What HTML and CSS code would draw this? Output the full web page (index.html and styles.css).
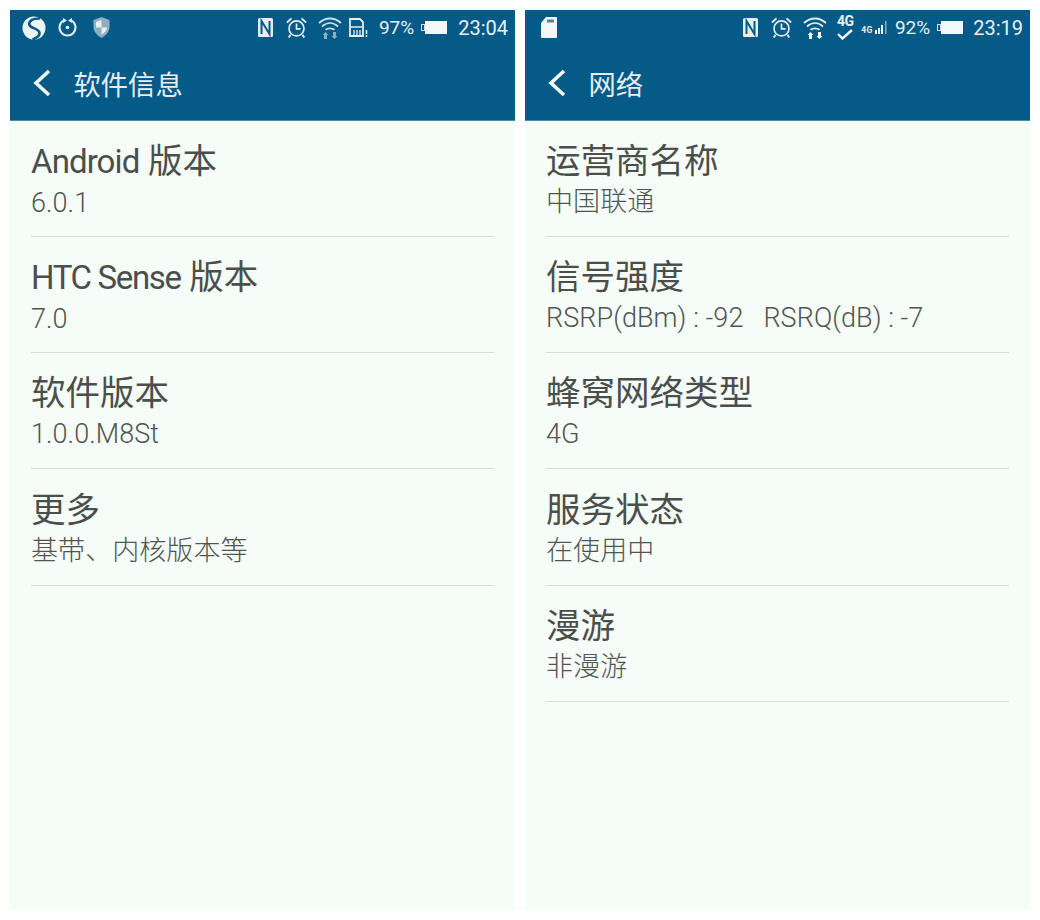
FILE: index.html
```html
<!DOCTYPE html>
<html lang="zh-CN">
<head>
  <meta charset="UTF-8">
  <title>软件信息 / 网络</title>
  <link rel="stylesheet" href="styles.css">
</head>
<body>

  <!-- Left phone: software info -->
  <div class="phone">
    <div class="status-bar">
      <div class="status-left">
        <svg class="icon-s" width="24" height="24" viewBox="0 0 24 24">
          <circle cx="12" cy="12" r="11.500" fill="#eef4f4"/>
          <path d="M18 2.500C11 2 6 5 7.500 9c1.500 4 9.500 3 10 8 .2 3-3 5-7 6.500" fill="none" stroke="#055a87" stroke-width="2.600"/>
        </svg>
        <svg class="icon-sync" width="21" height="19" viewBox="0 0 21 19">
          <path d="M14.500 2.500A8 8 0 1 1 6.500 2.500" fill="none" stroke="#e6eef1" stroke-width="2"/>
          <path d="M6 0l4 2.500L6 5zM15 0l-4 2.500L15 5z" fill="#e6eef1"/>
          <circle cx="10.500" cy="9.500" r="1.800" fill="#e6eef1"/>
        </svg>
        <svg class="icon-shield" width="17" height="21" viewBox="0 0 17 21">
          <path d="M8.500 0l8 3v7c0 5-4 8.500-8 11-4-2.500-8-6-8-11V3z" fill="#8fadbf"/>
          <path d="M8.500 3v7.500H3V5zM8.500 10.500H14c0 3-2.500 5.500-5.500 7z" fill="#e8f0f2"/>
        </svg>
      </div>
      <div class="status-right">
        <svg class="icon-n" width="15" height="19" viewBox="0 0 15 19">
          <rect width="15" height="19" rx="1.500" fill="#e6eef1"/>
          <path d="M3.500 16V3l8 13V3" fill="none" stroke="#055a87" stroke-width="2"/>
        </svg>
        <svg class="icon-alarm" width="21" height="21" viewBox="0 0 23 23">
          <circle cx="11.500" cy="12.500" r="8.200" fill="none" stroke="#e6eef1" stroke-width="1.800"/>
          <path d="M11.500 7V13H16" fill="none" stroke="#e6eef1" stroke-width="1.800"/>
          <path d="M1 6l5-4.500M22 6l-5-4.500M5 19.500l-2 3M18 19.500l2 3" stroke="#e6eef1" stroke-width="2"/>
        </svg>
        <svg class="icon-wifi" width="24" height="23" viewBox="0 0 24 23">
          <path d="M1 7C7.500 1 16.500 1 23 7M4 10.500C9 6 15 6 20 10.500M7.500 13.800C10 11.800 14 11.800 16.500 13.800" fill="none" stroke="#cfdee5" stroke-width="1.800"/>
          <path d="M7.500 16l3 3H9v4H6v-4H4.500zM16.500 23l-3-3H15v-4h3v4h1.500z" fill="#8fadbf"/>
        </svg>
        <svg class="icon-sim" width="19" height="19" viewBox="0 0 19 19">
          <path d="M1 1h10l3 3v14H1z" fill="none" stroke="#e6eef1" stroke-width="1.800"/>
          <path d="M2 9h11" stroke="#e6eef1" stroke-width="1.500"/>
          <path d="M5 12v5M8 12v5M11 12v5" stroke="#e6eef1" stroke-width="1.300"/>
          <path d="M17.500 12v4M17.500 17v2" stroke="#e6eef1" stroke-width="1.500"/>
        </svg>
        <span class="percent">97%</span>
        <svg class="icon-battery" width="26" height="13" viewBox="0 0 26 13">
          <rect x="4" y="0" width="22" height="13" fill="#f2f7f7"/>
          <rect x="0.500" y="3.500" width="3" height="6" fill="none" stroke="#cfdee5"/>
        </svg>
        <span class="clock">23:04</span>
      </div>
    </div>
    <div class="app-bar">
      <svg class="back" width="20" height="30" viewBox="0 0 20 30">
        <path d="M17 3L4 15l13 12" fill="none" stroke="#f2f7f7" stroke-width="3.600"/>
      </svg>
      <span class="app-title">软件信息</span>
    </div>
    <ul class="rows">
      <li class="row"><div class="row-title"><span class="latin latin-wide">Android</span> 版本</div><div class="row-sub">6.0.1</div></li>
      <li class="row"><div class="row-title"><span class="latin">HTC Sense</span> 版本</div><div class="row-sub">7.0</div></li>
      <li class="row"><div class="row-title">软件版本</div><div class="row-sub">1.0.0.M8St</div></li>
      <li class="row"><div class="row-title">更多</div><div class="row-sub">基带、内核版本等</div></li>
    </ul>
  </div>

  <!-- Right phone: network -->
  <div class="phone">
    <div class="status-bar">
      <div class="status-left">
        <svg class="icon-sd" width="16" height="21" viewBox="0 0 16 21">
          <path d="M5 0h10a1 1 0 0 1 1 1v19a1 1 0 0 1-1 1H1a1 1 0 0 1-1-1V6z" fill="#f2f7f7"/>
          <path d="M6 2.500h7v3H6z" fill="#55859f"/>
        </svg>
      </div>
      <div class="status-right">
        <svg class="icon-n" width="15" height="19" viewBox="0 0 15 19">
          <rect width="15" height="19" rx="1.500" fill="#e6eef1"/>
          <path d="M3.500 16V3l8 13V3" fill="none" stroke="#055a87" stroke-width="2"/>
        </svg>
        <svg class="icon-alarm" width="21" height="21" viewBox="0 0 23 23">
          <circle cx="11.500" cy="12.500" r="8.200" fill="none" stroke="#e6eef1" stroke-width="1.800"/>
          <path d="M11.500 7V13H16" fill="none" stroke="#e6eef1" stroke-width="1.800"/>
          <path d="M1 6l5-4.500M22 6l-5-4.500M5 19.500l-2 3M18 19.500l2 3" stroke="#e6eef1" stroke-width="2"/>
        </svg>
        <svg class="icon-wifi" width="24" height="23" viewBox="0 0 24 23">
          <path d="M1 7C7.500 1 16.500 1 23 7M4 10.500C9 6 15 6 20 10.500M7.500 13.800C10 11.800 14 11.800 16.500 13.800" fill="none" stroke="#e6eef1" stroke-width="1.800"/>
          <path d="M7.500 16l3 3H9v4H6v-4H4.500zM16.500 23l-3-3H15v-4h3v4h1.500z" fill="#f2f7f7"/>
        </svg>
        <div class="lte">
          <span class="lte-text">4G</span>
          <svg width="16" height="11" viewBox="0 0 16 11">
            <path d="M1 5l4.500 4.500L15 1" fill="none" stroke="#f2f7f7" stroke-width="2.400"/>
          </svg>
        </div>
        <div class="signal">
          <span class="signal-text">4G</span>
          <svg width="12" height="13" viewBox="0 0 12 13">
            <path d="M0 9h2v4H0zM3 7h2v6H3zM6 4h2v9H6z" fill="#f2f7f7"/>
            <path d="M10 0h1.500v13H10z" fill="#8fadbf"/>
          </svg>
        </div>
        <span class="percent percent-net">92%</span>
        <svg class="icon-battery" width="26" height="13" viewBox="0 0 26 13">
          <rect x="4" y="0" width="22" height="13" fill="#f2f7f7"/>
          <rect x="0.500" y="3.500" width="3" height="6" fill="none" stroke="#cfdee5"/>
        </svg>
        <span class="clock clock-net">23:19</span>
      </div>
    </div>
    <div class="app-bar">
      <svg class="back" width="20" height="30" viewBox="0 0 20 30">
        <path d="M17 3L4 15l13 12" fill="none" stroke="#f2f7f7" stroke-width="3.600"/>
      </svg>
      <span class="app-title">网络</span>
    </div>
    <ul class="rows">
      <li class="row"><div class="row-title">运营商名称</div><div class="row-sub">中国联通</div></li>
      <li class="row"><div class="row-title">信号强度</div><div class="row-sub">RSRP(dBm) : -92&nbsp;&nbsp; RSRQ(dB) : -7</div></li>
      <li class="row"><div class="row-title">蜂窝网络类型</div><div class="row-sub">4G</div></li>
      <li class="row"><div class="row-title">服务状态</div><div class="row-sub">在使用中</div></li>
      <li class="row"><div class="row-title">漫游</div><div class="row-sub">非漫游</div></li>
    </ul>
  </div>

</body>
</html>
```

FILE: styles.css
```css
/* Basic Styling */
body {
  margin: 0;
  padding: 10px;
  height: 920px;
  box-sizing: border-box;
  display: flex;
  gap: 10px;
  background-color: #ffffff;
  font-family: Roboto, "Noto Sans CJK SC", sans-serif;
  overflow: hidden;
}

.phone {
  width: 505px;
  height: 900px;
  background-color: #f6fcf7;
}

/* Status bar */
.status-bar {
  height: 38px;
  box-sizing: border-box;
  display: flex;
  justify-content: space-between;
  align-items: center;
  padding: 0 7px 3px 12px;
  background-color: #055a87;
  color: #e9f1f3;
}

.status-left,
.status-right {
  display: flex;
  align-items: center;
}

.icon-sync {
  margin-left: 11px;
}

.icon-shield {
  margin-left: 15px;
}

.icon-sd {
  margin-left: 4px;
}

.icon-alarm {
  margin-left: 13px;
}

.icon-wifi {
  margin-left: 11px;
}

.icon-sim {
  margin-left: 7px;
}

.percent {
  margin-left: 11px;
  font-size: 19px;
}

.icon-battery {
  margin-left: 7px;
}

.clock {
  margin-left: 11px;
  font-size: 20px;
}

.percent-net {
  margin-left: 8px;
}

.clock-net {
  margin-left: 10px;
}

/* 4G badges in the right phone */
.lte {
  display: flex;
  flex-direction: column;
  align-items: center;
  width: 16px;
  margin-left: 10px;
  gap: 2px;
}

.lte-text {
  font-size: 14px;
  font-weight: 700;
  line-height: 11px;
  letter-spacing: -0.500px;
}

.signal {
  display: flex;
  align-items: flex-end;
  gap: 2px;
  margin-left: 8px;
}

.signal-text {
  font-size: 8.500px;
  font-weight: 700;
  line-height: 8px;
  letter-spacing: 0.500px;
}

/* App bar */
.app-bar {
  height: 73px;
  box-sizing: border-box;
  padding: 0 0 3px 22px;
  display: flex;
  align-items: center;
  background-color: #055a87;
  border-bottom: 1px solid #4d8aa9;
}

.back {
  flex: none;
}

.app-title {
  margin-left: 21.500px;
  font-size: 27.300px;
  color: #e4eef1;
}

/* List rows */
.rows {
  list-style: none;
  margin: 0 21px;
  padding: 0;
}

.row {
  height: 116.150px;
  box-sizing: border-box;
  padding-top: 17.100px;
  border-bottom: 1px solid #d8ddd9;
}

.row-title {
  font-size: 34.500px;
  line-height: 46px;
  color: #4a4f4c;
}

.latin {
  font-size: 33px;
  letter-spacing: -1.350px;
}

.latin-wide {
  letter-spacing: -0.900px;
}

.row-sub {
  font-size: 27px;
  font-weight: 300;
  line-height: 36px;
  letter-spacing: 0.070px;
  color: #505552;
}
```
